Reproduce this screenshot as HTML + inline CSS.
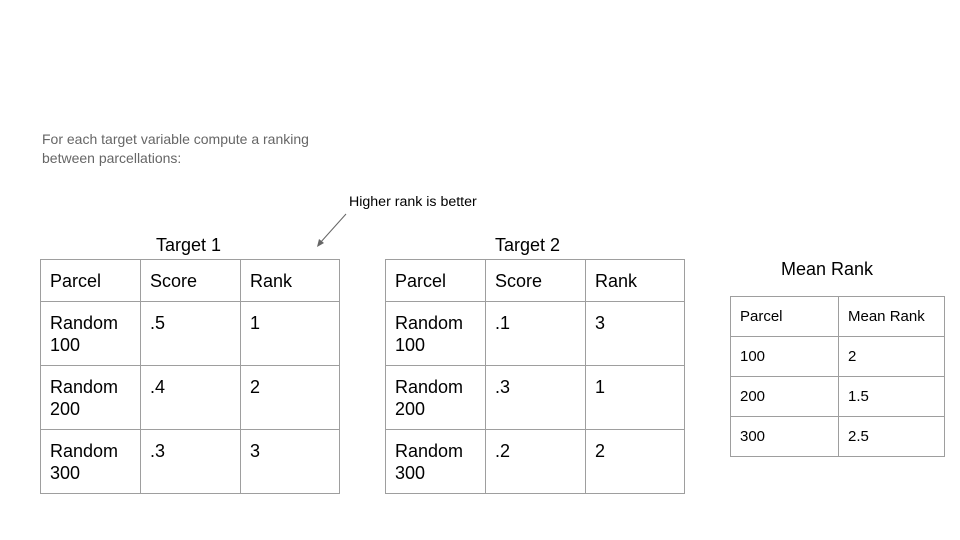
<html><head><style>
body{margin:0;width:960px;height:540px;background:#fff;position:relative;font-family:"Liberation Sans",sans-serif;overflow:hidden}
.a{position:absolute;white-space:nowrap}
table{position:absolute;border-collapse:collapse;color:#000}
td{border:1px solid #9e9e9e;vertical-align:top;padding:0 9px;box-sizing:border-box}
.b td{font-size:18px;line-height:22px}
.c td{font-size:15px;line-height:18px;padding-top:11px}
</style></head><body>
<div class="a" style="left:42px;top:130px;font-size:14px;line-height:19px;color:#666">For each target variable compute a ranking<br>between parcellations:</div>
<div class="a" style="left:349px;top:194px;font-size:14.2px">Higher rank is better</div>
<svg class="a" style="left:0;top:0" width="960" height="540"><line x1="346" y1="214" x2="320" y2="243" stroke="#666" stroke-width="1"/><polygon points="317,247 319,239 324,243" fill="#666"/></svg>
<div class="a" style="left:156px;top:235px;font-size:18px">Target 1</div>
<div class="a" style="left:495px;top:235px;font-size:18px">Target 2</div>
<div class="a" style="left:781px;top:259px;font-size:18px">Mean Rank</div>
<table class="b" style="left:40px;top:259px">
<tr style="height:42px"><td style="width:100px;padding-top:10px">Parcel</td><td style="width:100px;padding-top:10px">Score</td><td style="width:99px;padding-top:10px">Rank</td></tr>
<tr style="height:64px"><td style="padding-top:10px">Random<br>100</td><td style="padding-top:10px">.5</td><td style="padding-top:10px">1</td></tr>
<tr style="height:64px"><td style="padding-top:10px">Random<br>200</td><td style="padding-top:10px">.4</td><td style="padding-top:10px">2</td></tr>
<tr style="height:64px"><td style="padding-top:10px">Random<br>300</td><td style="padding-top:10px">.3</td><td style="padding-top:10px">3</td></tr>
</table>
<table class="b" style="left:385px;top:259px">
<tr style="height:42px"><td style="width:100px;padding-top:10px">Parcel</td><td style="width:100px;padding-top:10px">Score</td><td style="width:99px;padding-top:10px">Rank</td></tr>
<tr style="height:64px"><td style="padding-top:10px">Random<br>100</td><td style="padding-top:10px">.1</td><td style="padding-top:10px">3</td></tr>
<tr style="height:64px"><td style="padding-top:10px">Random<br>200</td><td style="padding-top:10px">.3</td><td style="padding-top:10px">1</td></tr>
<tr style="height:64px"><td style="padding-top:10px">Random<br>300</td><td style="padding-top:10px">.2</td><td style="padding-top:10px">2</td></tr>
</table>
<table class="c" style="left:730px;top:296px">
<tr style="height:40px"><td style="width:108px">Parcel</td><td style="width:106px">Mean Rank</td></tr>
<tr style="height:40px"><td>100</td><td>2</td></tr>
<tr style="height:40px"><td>200</td><td>1.5</td></tr>
<tr style="height:40px"><td>300</td><td>2.5</td></tr>
</table>
</body></html>
